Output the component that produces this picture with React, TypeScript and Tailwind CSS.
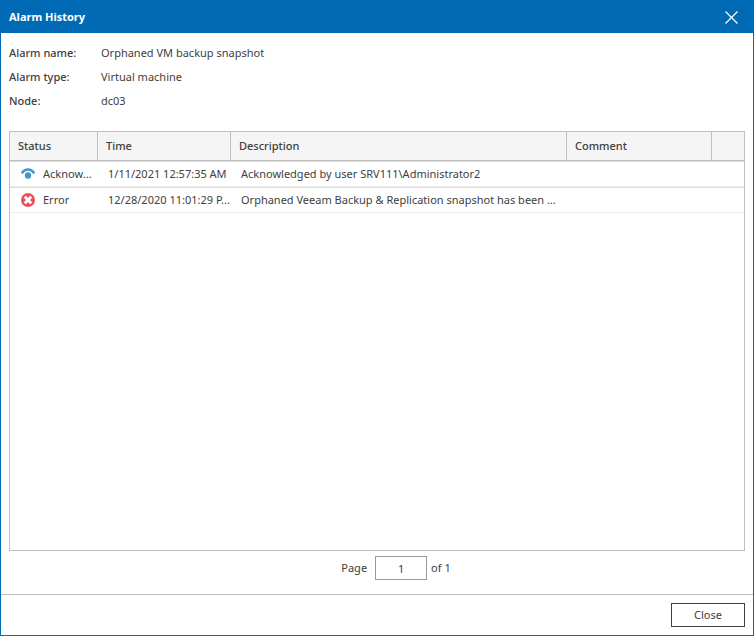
import { ReactNode } from "react";

interface HistoryRow {
  status: "Acknowledged" | "Error";
  time: string;
  description: string;
  comment: string;
}

const details = [
  { label: "Alarm name:", value: "Orphaned VM backup snapshot" },
  { label: "Alarm type:", value: "Virtual machine" },
  { label: "Node:", value: "dc03" },
];

const rows: HistoryRow[] = [
  {
    status: "Acknowledged",
    time: "1/11/2021 12:57:35 AM",
    description: "Acknowledged by user SRV111\\Administrator2",
    comment: "",
  },
  {
    status: "Error",
    time: "12/28/2020 11:01:29 P...",
    description:
      "Orphaned Veeam Backup & Replication snapshot has been detected",
    comment: "",
  },
];

function StatusIcon({ status }: { status: HistoryRow["status"] }) {
  if (status === "Error") {
    return (
      <svg width="14" height="14" viewBox="0 0 14 14" className="shrink-0">
        <circle cx="7" cy="7" r="7" fill="#e5535a" />
        <path
          d="M4.8 4.8l4.4 4.4M9.2 4.8l-4.4 4.4"
          stroke="#fff"
          strokeWidth="2.8"
          strokeLinecap="square"
        />
      </svg>
    );
  }
  return (
    <svg width="14" height="14" viewBox="0 0 14 14" className="shrink-0">
      <path
        d="M0.9 6.4C2.4 3.7 4.5 2.5 7 2.5s4.6 1.2 6.1 3.9"
        fill="none"
        stroke="#4795c9"
        strokeWidth="2.6"
      />
      <circle cx="7" cy="8.5" r="3.2" fill="#4795c9" />
    </svg>
  );
}

function HeadCell({ children }: { children?: ReactNode }) {
  return (
    <th className="h-[29px] border-r border-b border-[#c0c0c0] bg-[#f5f5f5] px-2 text-left font-medium last:border-r-0">
      {children}
    </th>
  );
}

function App() {
  return (
    <div className="flex min-h-screen flex-col border border-t-0 border-[#006ab5] bg-white font-['Noto_Sans','Open_Sans',sans-serif] text-[11px] leading-4 text-[#404040]">
      <header className="flex h-[33px] items-center justify-between bg-[#006ab5] pt-px pr-[15px] pl-2 text-white">
        <h1 className="font-bold">Alarm History</h1>
        <button type="button" aria-label="Close window">
          <svg width="13" height="13" viewBox="0 0 13 13">
            <path
              d="M0.5 0.5l12 12M12.5 0.5l-12 12"
              stroke="#fff"
              strokeWidth="1.2"
            />
          </svg>
        </button>
      </header>

      <main className="flex grow flex-col px-2 pt-2">
        <dl className="grid grid-cols-[92px_1fr] leading-6">
          {details.map((item) => (
            <div key={item.label} className="contents">
              <dt className="font-medium">{item.label}</dt>
              <dd>{item.value}</dd>
            </div>
          ))}
        </dl>

        <div className="mt-[18px] grow border border-[#c0c0c0]">
          <table className="w-full table-fixed border-separate border-spacing-0">
            <colgroup>
              <col className="w-[88px]" />
              <col className="w-[133px]" />
              <col />
              <col className="w-[145px]" />
              <col className="w-8" />
            </colgroup>
            <thead>
              <tr>
                <HeadCell>Status</HeadCell>
                <HeadCell>Time</HeadCell>
                <HeadCell>Description</HeadCell>
                <HeadCell>Comment</HeadCell>
                <HeadCell />
              </tr>
            </thead>
            <tbody className="[&_td]:h-[26px] [&_td]:border-y [&_td]:border-t-[#dadada] [&_td]:border-b-[#ededed]">
              {rows.map((row) => (
                <tr key={row.time}>
                  <td className="pr-1 pl-[11px]">
                    <div className="flex items-center gap-2">
                      <StatusIcon status={row.status} />
                      <span className="truncate">{row.status}</span>
                    </div>
                  </td>
                  <td className="pl-[10px] whitespace-nowrap">{row.time}</td>
                  <td className="truncate pr-2 pl-[10px]">
                    {row.description}
                  </td>
                  <td className="truncate px-[10px]">{row.comment}</td>
                  <td></td>
                </tr>
              ))}
            </tbody>
          </table>
        </div>

        <div className="flex h-[43px] items-start justify-center pt-[5px] pl-[38px]">
          <label className="flex items-center gap-2">
            Page
            <input
              type="text"
              defaultValue="1"
              className="h-6 w-[52px] border border-[#999999] text-center outline-none"
            />
          </label>
          <span className="ml-1 leading-6">of 1</span>
        </div>
      </main>

      <footer className="flex justify-end border-t border-[#c0c0c0] p-2">
        <button
          type="button"
          className="h-6 w-[74px] border border-[#404040] bg-white"
        >
          Close
        </button>
      </footer>
    </div>
  );
}

export default App;
